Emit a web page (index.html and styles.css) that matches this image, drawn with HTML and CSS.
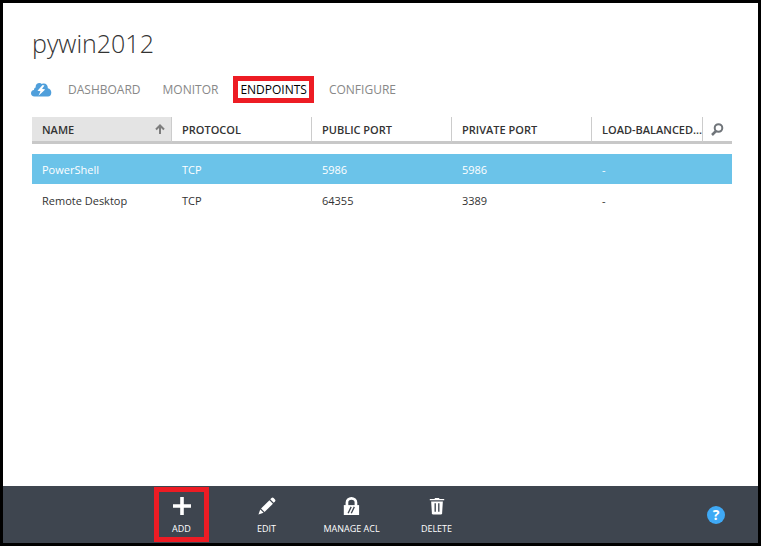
FILE: index.html
```
<!DOCTYPE html>
<html lang="en">
<head>
<meta charset="utf-8">
<title>pywin2012 - Endpoints</title>
<link rel="stylesheet" href="styles.css">
</head>
<body>
<div class="page">
  <main class="content">
    <h1 class="title">pywin2012</h1>
    <nav class="tabs">
      <a class="tab tab-home" href="#" aria-label="Quick start">
        <svg width="21" height="14" viewBox="0 0 21 14" aria-hidden="true">
          <path fill="#4f9fdb" d="M3.500 13.500C1.200 13.500 0 12 0 10.200C0 8.300 1.200 7.300 3 7C3 5.500 3.600 4.700 4.700 4.400C4.300 1.900 6 0 8.500 0C9.500 0 10.300 .4 10.800 1C14 -.4 17 1.500 16.800 5.200C19 5.400 20.300 7.300 20.300 9.500C20.300 12 19 13.500 17 13.500Z"/>
          <path fill="#fff" d="M11.600 2L6.500 7.800L9.500 8.300L7.500 12.800L14.200 6.500L11 5.800L13.500 2.600Z"/>
        </svg>
      </a>
      <a class="tab" href="#">DASHBOARD</a>
      <a class="tab" href="#">MONITOR</a>
      <a class="tab tab-active" href="#" aria-current="page">ENDPOINTS</a>
      <a class="tab" href="#">CONFIGURE</a>
    </nav>
    <table class="grid">
      <colgroup>
        <col class="col"><col class="col"><col class="col"><col class="col"><col><col class="col-search">
      </colgroup>
      <thead>
        <tr>
          <th class="sorted" aria-sort="ascending"><span class="sort-head">NAME
            <svg width="10" height="10" viewBox="0 0 10 10" aria-hidden="true"><path d="M5 10V1.500M1 5.500L5 1.500L9 5.500" fill="none" stroke="#7d7d7d" stroke-width="2"/></svg></span></th>
          <th>PROTOCOL</th>
          <th>PUBLIC PORT</th>
          <th>PRIVATE PORT</th>
          <th class="load">LOAD-BALANCED...</th>
          <th class="search"><button class="search-button" type="button" aria-label="Search">
            <svg width="13" height="13" viewBox="0 0 13 13" aria-hidden="true"><g fill="none" stroke="#70757a"><circle cx="7.500" cy="5" r="3.800" stroke-width="2"/><path d="M5 8L1 12" stroke-width="2.500"/></g></svg>
          </button></th>
        </tr>
      </thead>
      <tbody>
        <tr class="selected"><td>PowerShell</td><td>TCP</td><td>5986</td><td>5986</td><td>-</td><td></td></tr>
        <tr><td>Remote Desktop</td><td>TCP</td><td>64355</td><td>3389</td><td>-</td><td></td></tr>
      </tbody>
    </table>
  </main>
  <footer class="bar">
    <div class="commands">
      <button class="command command-marked" type="button">
        <svg width="20" height="20" viewBox="0 0 20 20" aria-hidden="true"><path fill="#fff" d="M8 0h4v8h8v4h-8v8H8v-8H0V8h8z"/></svg>
        <span>ADD</span>
      </button>
      <button class="command" type="button">
        <svg width="20" height="20" viewBox="0 0 20 20" aria-hidden="true"><g fill="#fff"><path d="M15 1.200Q16.200 0 17.400 1.200L18.900 2.700Q20 3.900 18.900 5L17.500 6.400L13.600 2.600Z"/><path d="M12.700 3.500L16.600 7.400L7.300 16.700L3.400 12.800Z"/><path d="M2.500 13.900L6.200 17.600L.5 19.500Z"/></g></svg>
        <span>EDIT</span>
      </button>
      <button class="command" type="button">
        <svg width="18" height="20" viewBox="0 0 18 20" aria-hidden="true"><path d="M4.500 10V6a5 4.500 0 0 1 10 0v4" fill="none" stroke="#fff" stroke-width="3"/><path fill="#fff" d="M1 9h17v11H1z"/><path d="M9.200 11L5.800 18M12.700 11L9.300 18" stroke="#3e454f" stroke-width="1.500"/></svg>
        <span>MANAGE ACL</span>
      </button>
      <button class="command" type="button">
        <svg width="16" height="20" viewBox="0 0 16 20" aria-hidden="true"><path fill="#fff" d="M5.500 1h5v1.200H16v1.500H0V2.200h5.500z"/><path fill="#fff" d="M1.500 5h13l-.8 13q-.1 1.500-1.600 1.500H3.900q-1.500 0-1.600-1.500z"/><path d="M6 7v9.500M10 7v9.500" stroke="#3e454f" stroke-width="1.500"/></svg>
        <span>DELETE</span>
      </button>
    </div>
    <button class="help" type="button" aria-label="Help">?</button>
  </footer>
</div>
</body>
</html>
```
FILE: styles.css
```
* {
  box-sizing: border-box;
}

body {
  margin: 0;
  font-family: "Open Sans", "Noto Sans", sans-serif;
  font-size: 11px;
  color: #333;
  background: #fff;
}

button {
  padding: 0;
  border: 0;
  background: none;
  font: inherit;
  color: inherit;
}

svg {
  display: block;
}

.page {
  display: flex;
  flex-direction: column;
  min-height: 100vh;
  border: 3px solid #000;
}

.content {
  flex: 1;
  padding: 20px 26px 0 29px;
}

.title {
  margin: 0;
  font-size: 25px;
  font-weight: 300;
  line-height: 40px;
  color: #333;
}

.tabs {
  display: flex;
  align-items: center;
  gap: 22px;
  height: 27px;
  margin: 13px 0 14px;
  font-size: 12px;
}

.tab {
  line-height: 17px;
  color: #888;
  text-decoration: none;
}

.tab-home {
  margin: 0 -6px 0 -1px;
}

.tab-active {
  margin: 0 -7px;
  padding: 0 2px;
  border: 5px solid #ed1c24;
  line-height: 17px;
  color: #000;
}

.grid {
  width: 100%;
  table-layout: fixed;
  border-collapse: separate;
  border-spacing: 0;
}

.col {
  width: 20%;
}

.col-search {
  width: 29px;
}

.grid th {
  height: 27px;
  padding: 0 10px;
  border-right: 1px solid #ccc;
  border-bottom: 3px solid #c8c8c8;
  font-weight: 600;
  text-align: left;
  white-space: nowrap;
}

.grid .sorted {
  padding-right: 6px;
  background: #e4e4e4;
}

.sort-head {
  display: flex;
  align-items: center;
  justify-content: space-between;
}

.grid .load {
  padding-right: 0;
}

.grid .search {
  padding: 0 0 0 8px;
  border-right: 0;
}

.search-button {
  display: block;
}

.grid tbody::before {
  content: "";
  display: table-row;
  height: 10px;
}

.grid td {
  height: 33px;
  padding: 0 10px;
}

.grid .selected td {
  height: 30px;
  background: #6bc3e9;
  color: #fff;
}

.bar {
  display: flex;
  align-items: center;
  justify-content: space-between;
  height: 57px;
  padding: 0 33px 0 136px;
  background: #3e454f;
  color: #fff;
}

.commands {
  display: grid;
  grid-template-columns: repeat(4, 85px);
  justify-items: center;
}

.command {
  display: flex;
  flex-direction: column;
  align-items: center;
  gap: 6px;
  min-width: 55px;
  height: 55px;
  padding-top: 5px;
  border: 5px solid transparent;
  font-size: 9px;
  line-height: 16px;
  white-space: nowrap;
}

.command-marked {
  border-color: #ed1c24;
}

.help {
  width: 18px;
  height: 18px;
  border-radius: 50%;
  background: #3fa9f5;
  font-size: 14px;
  font-weight: 700;
  line-height: 18px;
}
```
